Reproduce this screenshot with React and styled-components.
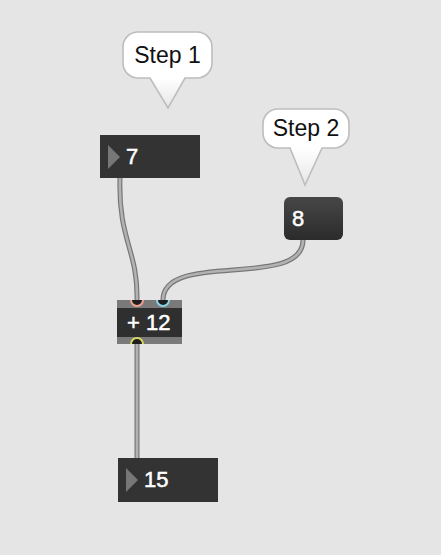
import React from 'react';
import styled, { createGlobalStyle } from 'styled-components';

const GlobalStyle = createGlobalStyle`
  html, body {
    margin: 0;
    padding: 0;
    background: #e5e5e5;
  }
`

const Canvas = styled.div`
  position: relative;
  width: 441px;
  height: 555px;
  background: #e5e5e5;
  overflow: hidden;
  font-family: 'Liberation Sans', Arial, sans-serif;
`

const Cables = styled.svg`
  position: absolute;
  left: 0;
  top: 0;
  width: 441px;
  height: 555px;
  pointer-events: none;
`

// every patcher box sits on the canvas at its own coordinates
const Node = styled.div`
  position: absolute;
  left: ${p => p.x}px;
  top: ${p => p.y}px;
  width: ${p => p.w}px;
  height: ${p => p.h}px;
  box-sizing: border-box;
`

const WhiteText = styled.span`
  color: #ffffff;
  font-size: 22px;
  -webkit-text-stroke: 0.5px #ffffff;
`

const NumberBox = styled(Node)`
  background: #333333;
  display: flex;
  align-items: center;
  gap: 6px;
  padding-left: 8px;
`

const Arrow = styled.div`
  width: 0;
  height: 0;
  border-top: 12px solid transparent;
  border-bottom: 12px solid transparent;
  border-left: 12px solid #777777;
`

const MessageBox = styled(Node)`
  background: linear-gradient(#474747, #2b2b2b);
  border-radius: 6px;
  display: flex;
  align-items: center;
  padding-left: 8px;
`

const ObjectBox = styled(Node)`
  background: #7a7a7a;
  display: flex;
  flex-direction: column;
  padding: 8px 0 7px;
`

const ObjectBody = styled.div`
  flex: 1;
  background: #2f2f2f;
  display: flex;
  align-items: center;
  padding-left: 10px;
`

const PortRow = styled.div`
  position: absolute;
  left: 13px;
  ${p => (p.bottom ? 'bottom: -7px;' : 'top: -7px;')}
  display: flex;
  gap: 12px;
`

const Port = styled.div`
  width: 14px;
  height: 14px;
  box-sizing: border-box;
  border-radius: 50%;
  background: #1e1e1e;
  border: 2px solid ${p => p.color};
  clip-path: ${p => (p.bottom ? 'inset(0 0 7px 0)' : 'inset(7px 0 0 0)')};
`

const BubbleWrap = styled(Node)`
  display: flex;
  justify-content: center;
`

const BubbleShape = styled.svg`
  position: absolute;
  left: 0;
  top: 0;
  overflow: visible;
`

const BubbleText = styled.span`
  position: relative;
  margin-top: ${p => p.offset}px;
  font-size: 23px;
  color: #111111;
  line-height: 1;
`

function Bubble({ x, y, w, h, tailLeft, tailRight, tipX, tipY, children }) {
  const r = 15;
  const d = `M ${r} 0 H ${w - r} A ${r} ${r} 0 0 1 ${w} ${r} V ${h - r} A ${r} ${r} 0 0 1 ${w - r} ${h}
    H ${tailRight} L ${tipX} ${tipY} L ${tailLeft} ${h} H ${r} A ${r} ${r} 0 0 1 0 ${h - r} V ${r} A ${r} ${r} 0 0 1 ${r} 0 Z`;
  const id = `bg${x}`;
  return (
    <BubbleWrap x={x} y={y} w={w} h={tipY}>
      <BubbleShape width={w} height={tipY}>
        <defs>
          <linearGradient id={id} x1="0" y1="0" x2="0" y2="1">
            <stop offset="0" stopColor="#ffffff" />
            <stop offset={h / tipY} stopColor="#ffffff" />
            <stop offset="1" stopColor="#e6e6e6" />
          </linearGradient>
        </defs>
        <path d={d} fill={`url(#${id})`} stroke="#bdbdbd" strokeWidth="1.6" />
      </BubbleShape>
      <BubbleText offset={(h - 23) / 2}>{children}</BubbleText>
    </BubbleWrap>
  );
}

function Cable({ d }) {
  return (
    <g fill="none" strokeLinecap="round">
      <path d={d} stroke="#777777" strokeWidth="5" />
      <path d={d} stroke="#b2b2b2" strokeWidth="2.6" />
    </g>
  );
}

export default function App() {
  return (
    <>
      <GlobalStyle />
      <Canvas>
        <Bubble x={123} y={32} w={89} h={46} tailLeft={27} tailRight={62} tipX={45} tipY={76}>
          Step 1
        </Bubble>
        <Bubble x={263} y={109} w={86} h={39} tailLeft={27} tailRight={59} tipX={42} tipY={76}>
          Step 2
        </Bubble>

        <Cables viewBox="0 0 441 555">
          <Cable d="M 120 178 C 118 240, 138 250, 137 300" />
          <Cable d="M 303 240 C 303 290, 163 250, 163 300" />
          <Cable d="M 137 344 L 137 458" />
        </Cables>

        <NumberBox x={100} y={135} w={100} h={43}>
          <Arrow />
          <WhiteText>7</WhiteText>
        </NumberBox>

        <MessageBox x={284} y={197} w={59} h={43}>
          <WhiteText>8</WhiteText>
        </MessageBox>

        <ObjectBox x={117} y={300} w={65} h={44}>
          <ObjectBody>
            <WhiteText>+ 12</WhiteText>
          </ObjectBody>
          <PortRow>
            <Port color="#f0a090" />
            <Port color="#8ad4e6" />
          </PortRow>
          <PortRow bottom>
            <Port bottom color="#d8d860" />
          </PortRow>
        </ObjectBox>

        <NumberBox x={118} y={458} w={100} h={44}>
          <Arrow />
          <WhiteText>15</WhiteText>
        </NumberBox>
      </Canvas>
    </>
  );
}
